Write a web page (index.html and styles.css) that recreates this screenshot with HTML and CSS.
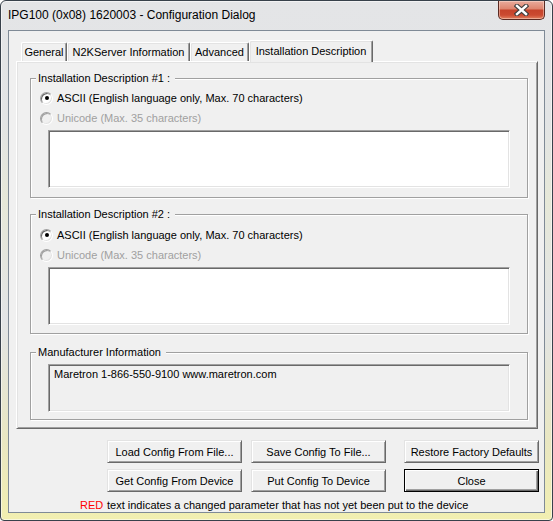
FILE: index.html
```html
<!DOCTYPE html>
<html>
<head>
<meta charset="utf-8">
<title>Configuration Dialog</title>
<link rel="stylesheet" href="styles.css">
</head>
<body>
<div class="window">
  <div class="titlebar">
    <div class="title">IPG100 (0x08) 1620003 - Configuration Dialog</div>
    <div class="closebtn">
      <svg width="15" height="12" viewBox="0 0 15 12">
        <path d="M3 2 L12 10 M12 2 L3 10" stroke="#3e3e3e" stroke-width="4.6" stroke-linecap="square"/>
        <path d="M3 2 L12 10 M12 2 L3 10" stroke="#ffffff" stroke-width="2.4" stroke-linecap="square"/>
      </svg>
    </div>
  </div>
  <div class="client">
    <div class="tabs">
      <div class="tab tab-general">General</div>
      <div class="tab tab-n2k">N2KServer Information</div>
      <div class="tab tab-adv">Advanced</div>
      <div class="tab tab-inst active">Installation Description</div>
    </div>
    <div class="panel">
      <div class="group desc">
        <span class="legend">Installation Description #1 :</span>
        <div class="option"><span class="radio checked"></span><span>ASCII (English language only, Max. 70 characters)</span></div>
        <div class="option disabled"><span class="radio"></span><span>Unicode (Max. 35 characters)</span></div>
        <div class="edit"></div>
      </div>
      <div class="group desc second">
        <span class="legend">Installation Description #2 :</span>
        <div class="option"><span class="radio checked"></span><span>ASCII (English language only, Max. 70 characters)</span></div>
        <div class="option disabled"><span class="radio"></span><span>Unicode (Max. 35 characters)</span></div>
        <div class="edit"></div>
      </div>
      <div class="group manuf">
        <span class="legend">Manufacturer Information</span>
        <div class="edit readonly">Maretron 1-866-550-9100 www.maretron.com</div>
      </div>
    </div>
    <div class="buttons">
      <div class="btn">Load Config From File...</div>
      <div class="btn">Save Config To File...</div>
      <div class="btn far">Restore Factory Defaults</div>
      <div class="btn">Get Config From Device</div>
      <div class="btn">Put Config To Device</div>
      <div class="btn far default">Close</div>
    </div>
    <div class="footer"><span class="red">RED</span><span>text indicates a changed parameter that has not yet been put to the device</span></div>
  </div>
</div>
</body>
</html>
```

FILE: styles.css
```css
* { box-sizing: border-box; }
html, body { margin: 0; padding: 0; }
body {
  width: 553px;
  height: 521px;
  overflow: hidden;
  background: #ffffff;
  font-family: "Liberation Sans", Arial, sans-serif;
  font-size: 11px;
  color: #000;
}
.window {
  width: 553px;
  height: 521px;
  border: 1px solid #38414b;
  border-radius: 6px 6px 4px 4px;
  background:
    linear-gradient(to bottom, #e4e5e7 0px, #e2e4e5 120px, #e6e8d8 200px, #e2e4e6 320px, #e9e7c2 440px, #f2efb0 521px);
  box-shadow: inset 0 0 0 1px rgba(255,255,255,0.55);
  padding: 0 7px 7px 7px;
  display: flex;
  flex-direction: column;
}
.titlebar {
  height: 29px;
  flex: none;
  display: flex;
  justify-content: space-between;
  align-items: flex-start;
}
.title {
  font-size: 12px;
  line-height: 29px;
  color: #000;
  white-space: nowrap;
}
.closebtn {
  width: 47px;
  height: 19px;
  border: 1px solid #5a2a22;
  border-top: none;
  border-radius: 0 0 5px 5px;
  background: linear-gradient(to bottom, #e9ab9c 0%, #de8670 42%, #c6432b 52%, #cb4a31 78%, #e2805f 100%);
  box-shadow: inset 0 0 0 1px rgba(255,230,220,0.45);
  display: flex;
  align-items: center;
  justify-content: center;
}
.client {
  flex: 1;
  border: 1px solid #7f8a96;
  background: #f0f0f0;
  padding: 9px 6px 0 7px;
  display: flex;
  flex-direction: column;
}
.tabs {
  display: flex;
  align-items: flex-end;
  height: 21px;
  margin-left: 5px;
}
.tab {
  height: 19px;
  border-top: 1px solid #fff;
  border-left: 1px solid #fff;
  border-right: 1px solid #696969;
  border-radius: 2px 2px 0 0;
  box-shadow: inset -1px 0 0 #a0a0a0, inset 1px 1px 0 #e3e3e3;
  display: flex;
  align-items: center;
  justify-content: center;
  white-space: nowrap;
  background: #f0f0f0;
}
.tab-general { width: 46px; }
.tab-n2k { width: 123px; }
.tab-adv { width: 59px; }
.tab-inst { width: 124px; }
.tab.active {
  height: 22px;
  margin-bottom: -1px;
  padding-bottom: 2px;
  position: relative;
  z-index: 1;
}
.panel {
  height: 368px;
  border: 1px solid;
  border-color: #fff #696969 #696969 #fff;
  box-shadow: inset 1px 1px 0 #e3e3e3, inset -1px -1px 0 #a0a0a0;
  padding: 0 9px 0 13px;
  display: flex;
  flex-direction: column;
}
.group {
  position: relative;
  border: 1px solid #a0a0a0;
  box-shadow: 1px 1px 0 #fff, inset 1px 1px 0 #fff;
  padding: 9px 9px 0 9px;
}
.group.desc { height: 120px; margin-top: 16px; }
.group.second { padding-top: 10px; }
.group.manuf { height: 68px; margin-top: 18px; padding-top: 11px; }
.legend {
  position: absolute;
  left: 5px;
  top: -7px;
  line-height: 13px;
  padding: 0 5px 0 2px;
  background: #f0f0f0;
  white-space: nowrap;
}
.option {
  height: 20px;
  display: flex;
  align-items: center;
  gap: 4px;
}
.option.disabled { color: #a0a0a0; }
.radio {
  width: 13px;
  height: 13px;
  flex: none;
  border-radius: 50%;
  border: 1px solid;
  border-color: #a0a0a0 #fff #fff #a0a0a0;
  background: #fff;
  box-shadow: inset 1px 1px 0 #696969, inset -1px -1px 0 #e3e3e3;
  display: flex;
  align-items: center;
  justify-content: center;
}
.radio.checked::after {
  content: "";
  width: 4px;
  height: 4px;
  border-radius: 50%;
  background: #000;
}
.disabled .radio {
  background: #f0f0f0;
  box-shadow: inset 1px 1px 0 #a0a0a0, inset -1px -1px 0 #e3e3e3;
}
.edit {
  height: 58px;
  margin: 2px 8px 0 8px;
  background: #fff;
  border: 1px solid;
  border-color: #a0a0a0 #fff #fff #a0a0a0;
  box-shadow: inset 1px 1px 0 #696969, inset -1px -1px 0 #e3e3e3;
}
.edit.readonly {
  height: 48px;
  margin-top: 0;
  background: #f0f0f0;
  padding: 3px 5px;
  line-height: 13px;
}
.buttons {
  margin-top: 11px;
  margin-left: 91px;
  display: grid;
  grid-template-columns: 135px 135px 144px;
  grid-auto-rows: 23px;
  column-gap: 9px;
  row-gap: 6px;
}
.btn {
  height: 23px;
  background: #f0f0f0;
  border: 1px solid;
  border-color: #e3e3e3 #696969 #696969 #e3e3e3;
  box-shadow: inset 1px 1px 0 #fff, inset -1px -1px 0 #a0a0a0;
  display: flex;
  align-items: center;
  justify-content: center;
  white-space: nowrap;
}
.btn.far { margin-left: 9px; width: 135px; }
.btn.default {
  border-color: #000;
  box-shadow: inset 1px 1px 0 #fff, inset -1px -1px 0 #696969, inset -2px -2px 0 #a0a0a0;
}
.footer {
  margin-top: 6px;
  height: 14px;
  line-height: 14px;
  padding-left: 64px;
  display: flex;
  white-space: nowrap;
}
.red { color: #ff0000; width: 27px; flex: none; }
```
